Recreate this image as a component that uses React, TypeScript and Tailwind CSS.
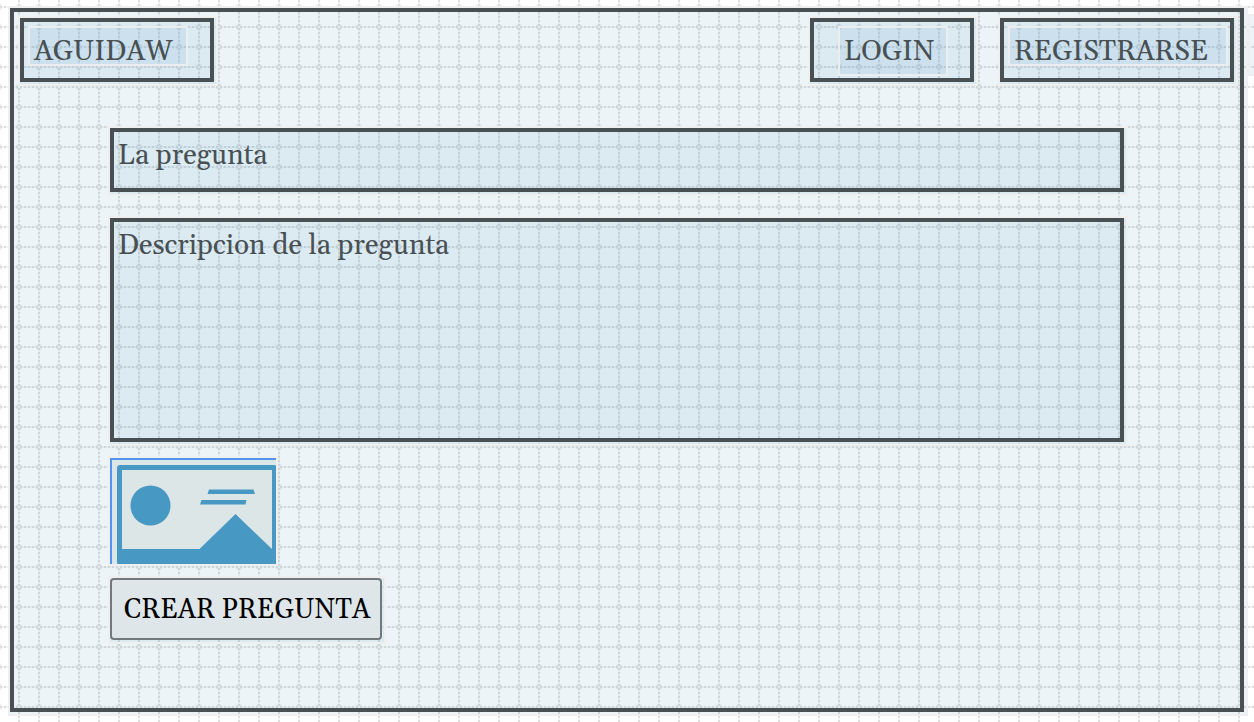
import type { ReactNode } from 'react';

function NavBox({ href, className, labelClassName, children }: {
  href: string;
  className: string;
  labelClassName: string;
  children: ReactNode;
}) {
  return (
    <a href={href} className={`block h-[70px] border-2 border-[#efefef] bg-[#5090cf]/10 pr-0.5 pb-0.5 ${className}`}>
      <span className="flex h-full items-start border-4 border-[#485054] pt-1 pl-1">
        <span className={`shrink-0 border-2 border-[#ebedee] bg-[#5aa8cc]/12 pt-1.5 pl-1 ${labelClassName}`}>{children}</span>
      </span>
    </a>
  );
}

function ImagePlaceholder() {
  return (
    <svg role="img" aria-label="Imagen" width="166" height="106" viewBox="0 0 166 106" className="block">
      <rect width="166" height="106" fill="#dde6e7" />
      <rect x="7" y="7" width="160" height="100" rx="3" fill="#4898c4" />
      <path d="M12 12H162V91L125.500 56L89.500 91H12Z" fill="#dde6e7" />
      <circle cx="40.500" cy="47.500" r="20" fill="#4898c4" />
      <path d="M99 31.500H143.500L145 36H97.500ZM91.500 42H136.500L135.500 46.500H90Z" fill="#4898c4" />
      <path d="M0 1H166M1 0V106" stroke="#5096f0" strokeWidth="2" />
    </svg>
  );
}

// Dotted 20px grid: clear crossings, dots along both axes, a ring at each crossing, faint base lines.
const grid =
  'bg-white bg-[image:conic-gradient(from_270deg_at_2px_2px,#f5f5f5_90deg,transparent_0),conic-gradient(from_270deg_at_2px_2px,#dedede_90deg,transparent_0),conic-gradient(from_270deg_at_2px_2px,#dedede_90deg,transparent_0),radial-gradient(circle_at_3px_3px,transparent_1px,#eeeeee_2px,#eeeeee_3px,transparent_3px),linear-gradient(#f5f5f5_2px,transparent_0),linear-gradient(90deg,#f5f5f5_2px,transparent_0)] bg-[size:20px_20px,4px_20px,20px_4px,20px_20px,20px_20px,20px_20px] bg-[position:18px_6px,0px_6px,18px_0px,16px_4px,0px_6px,18px_0px]';

export default function App() {
  return (
    <div className={`flex min-h-screen items-start pt-1.5 pb-1.5 pl-2 font-[Georgia,Gelasio,'Liberation_Serif',serif] text-[28px] leading-9 text-[#485054] ${grid}`}>
      <main className="flex min-w-0 flex-1 self-stretch border-2 border-[#efefef] bg-[#4491af]/10 pr-0.5 pb-0.5">
        <div className="min-w-0 flex-1 border-4 border-[#485054]">
          <header className="flex items-start pt-1 pr-0.5 pl-1">
            <NavBox href="#inicio" className="w-[200px]" labelClassName="h-10 w-[160px]">AGUIDAW</NavBox>
            <nav className="ml-auto flex gap-5">
              <NavBox href="#login" className="w-[170px]" labelClassName="ml-5 h-[50px] w-[110px]">LOGIN</NavBox>
              <NavBox href="#registrarse" className="w-[240px]" labelClassName="h-10 w-[220px]">REGISTRARSE</NavBox>
            </nav>
          </header>
          <form className="mt-10 mr-[112px] ml-[94px]" onSubmit={(e) => e.preventDefault()}>
            <div className="border-2 border-[#efefef] bg-[#5090cf]/10 pr-0.5 pb-0.5">
              <input aria-label="La pregunta" placeholder="La pregunta" className="block h-16 w-full border-4 border-[#485054] bg-transparent px-1 pb-2 outline-none placeholder:text-[#485054]" />
            </div>
            <div className="mt-5 border-2 border-[#efefef] bg-[#5090cf]/10 pr-0.5 pb-0.5">
              <textarea aria-label="Descripcion de la pregunta" placeholder="Descripcion de la pregunta" className="block h-56 w-full resize-none border-4 border-[#485054] bg-transparent px-1 pt-1.5 outline-none placeholder:text-[#485054]" />
            </div>
            <div className="mt-2.5 w-fit border-2 border-[#efefef]">
              <ImagePlaceholder />
            </div>
            <div className="mt-2.5 w-fit border-2 border-[#efefef] bg-[#5090cf]/10 pr-0.5 pb-0.5">
              <button className="block h-[62px] w-[272px] rounded border-2 border-[#72797c] bg-[#dfe6e9] pt-0.5 pl-0.5 text-[27px] whitespace-nowrap text-black">CREAR PREGUNTA</button>
            </div>
          </form>
        </div>
      </main>
      <div className="mt-2 h-[62px] w-1.5 border-y-2 border-l-2 border-[#efefef] bg-[#4491af]/10" />
    </div>
  );
}
